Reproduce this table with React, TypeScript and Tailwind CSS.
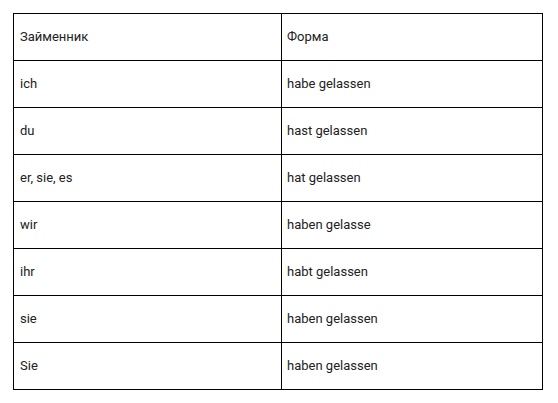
const rows: [string, string][] = [
  ['Займенник', 'Форма'],
  ['ich', 'habe gelassen'],
  ['du', 'hast gelassen'],
  ['er, sie, es', 'hat gelassen'],
  ['wir', 'haben gelasse'],
  ['ihr', 'habt gelassen'],
  ['sie', 'haben gelassen'],
  ['Sie', 'haben gelassen'],
]

export default function App() {
  return (
    <div className="w-[558px] h-[403px] bg-white pt-[13px] pl-[13px] font-['Roboto','Liberation_Sans',sans-serif] text-[13px] text-[#222]">
      <table className="w-[530px] border-collapse table-fixed">
        <tbody>
          {rows.map(([a, b]) => (
            <tr key={a} className="h-[47px]">
              <td className="w-[268px] border border-black pl-[6px] align-middle">{a}</td>
              <td className="border border-black pl-[5px] align-middle">{b}</td>
            </tr>
          ))}
        </tbody>
      </table>
    </div>
  )
}
